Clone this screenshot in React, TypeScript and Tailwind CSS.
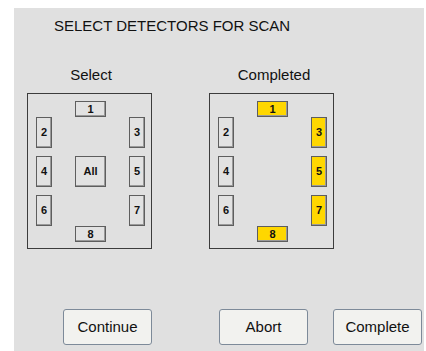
import React from "react";

type Det = { label: string; on?: boolean; wide?: boolean; tall?: boolean; big?: boolean };

function DetBtn({ d }: { d: Det }) {
  const size = d.big ? "w-[31px] h-[31px]" : d.wide ? "w-[31px] h-[16px]" : "w-[16px] h-[31px]";
  return (
    <div
      className={`${size} flex items-center justify-center border border-[#5e5e5e] shadow-[inset_-1px_-1px_0_#9a9a9a] text-[11px] font-bold leading-none text-[#111] ${
        d.on ? "bg-[#ffd700]" : "bg-[#e2e2e2]"
      }`}
    >
      {d.label}
    </div>
  );
}

function Panel({ on, showAll }: { on: boolean; showAll: boolean }) {
  return (
    <div className="w-[125px] h-[156px] border border-[#3c3c3c] flex flex-col pt-[7px] pl-[8px]">
      <div className="flex justify-start pl-[39px]">
        <DetBtn d={{ label: "1", wide: true, on }} />
      </div>
      <div className="flex">
        <DetBtn d={{ label: "2" }} />
        <div className="w-[77px]" />
        <DetBtn d={{ label: "3", on }} />
      </div>
      <div className="flex mt-[8px]">
        <DetBtn d={{ label: "4" }} />
        <div className="w-[23px]" />
        {showAll ? <DetBtn d={{ label: "All", big: true }} /> : <div className="w-[31px]" />}
        <div className="w-[23px]" />
        <DetBtn d={{ label: "5", on }} />
      </div>
      <div className="flex mt-[8px]">
        <DetBtn d={{ label: "6" }} />
        <div className="w-[77px]" />
        <DetBtn d={{ label: "7", on }} />
      </div>
      <div className="flex pl-[39px]">
        <DetBtn d={{ label: "8", wide: true, on }} />
      </div>
    </div>
  );
}

function Btn({ children }: { children: React.ReactNode }) {
  return (
    <div className="w-[89px] h-[36px] flex items-center justify-center rounded-[3px] border border-[#7d8a99] bg-[#f2f2ef] text-[15px] text-[#111]">
      {children}
    </div>
  );
}

export default function App() {
  return (
    <div
      className="w-[426px] h-[351px] bg-white pl-[14px] pt-[8px] overflow-hidden"
      style={{ fontFamily: '"Liberation Sans", Arial, sans-serif' }}
    >
      <div className="w-[410px] h-[343px] bg-[#e0e0e0] flex flex-col">
        <div className="pt-[10px] pl-[40px] text-[15px] leading-[15px] text-[#111]">
          SELECT DETECTORS FOR SCAN
        </div>
        <div className="flex mt-[34px] pl-[13px] gap-[57px]">
          <div className="flex flex-col w-[125px]">
            <div className="text-center pl-[3px] text-[15px] leading-[15px] text-[#111]">Select</div>
            <div className="mt-[11px]">
              <Panel on={false} showAll={true} />
            </div>
          </div>
          <div className="flex flex-col w-[125px]">
            <div className="text-center pl-[5px] text-[15px] leading-[15px] text-[#111]">Completed</div>
            <div className="mt-[11px]">
              <Panel on={true} showAll={false} />
            </div>
          </div>
        </div>
        <div className="flex mt-[60px] pl-[49px]">
          <Btn>Continue</Btn>
          <div className="w-[67px]" />
          <Btn>Abort</Btn>
          <div className="w-[25px]" />
          <Btn>Complete</Btn>
        </div>
      </div>
    </div>
  );
}
